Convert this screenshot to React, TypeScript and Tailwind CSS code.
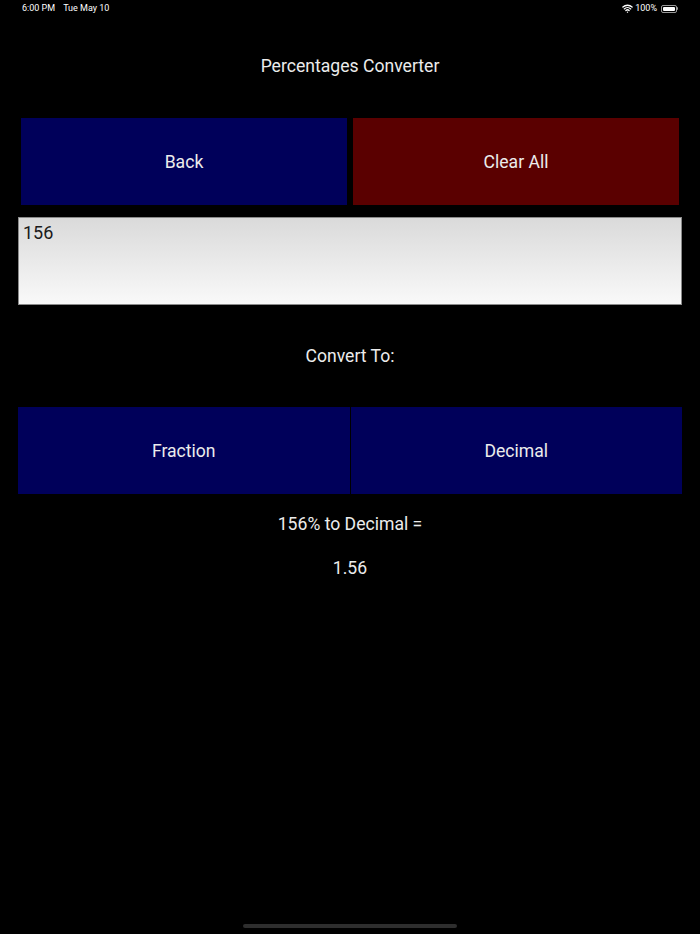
import { Wifi } from "lucide-react";

export default function App() {
  const roboto = { fontFamily: "Roboto, 'Liberation Sans', sans-serif" };

  return (
    <div
      className="relative min-h-[934px] w-full bg-black text-[#ececec] flex flex-col"
      style={roboto}
    >
      {/* status bar */}
      <div className="h-[17px] flex items-center justify-between px-[22px] text-[9px] text-white">
        <div className="flex gap-[8px]">
          <span>6:00 PM</span>
          <span>Tue May 10</span>
        </div>
        <div className="flex items-center gap-[2px]">
          <Wifi className="w-[11px] h-[11px]" strokeWidth={3} />
          <span>100%</span>
          <div className="ml-[2px] flex items-center">
            <div className="w-[16px] h-[8px] rounded-[2px] border border-white/60 p-[1px]">
              <div className="w-full h-full bg-white rounded-[1px]" />
            </div>
            <div className="w-[1px] h-[3px] bg-white/60 rounded-r" />
          </div>
        </div>
      </div>

      <h1 className="mt-[39px] text-center text-[17.6px] leading-[20px]">
        Percentages Converter
      </h1>

      <div className="mt-[42px] px-[21px] flex gap-[6px]">
        <button className="flex-1 h-[87px] pt-[2px] bg-[#00005a] text-[17.6px]">Back</button>
        <button className="flex-1 h-[87px] pt-[2px] bg-[#5a0000] text-[17.6px]">Clear All</button>
      </div>

      <div className="mt-[12px] mx-[18px] h-[88px] border border-[#8a8a8a] bg-gradient-to-b from-[#dadada] to-[#f9f9f9] px-[4px] pt-[3px] text-[18px] leading-[24px] text-[#1a1a1a]">
        156
      </div>

      <p className="mt-[41px] text-center text-[17.6px] leading-[20px]">Convert To:</p>

      <div className="mt-[41px] mx-[18px] flex gap-px">
        <button className="flex-1 h-[87px] pt-[2px] bg-[#00005a] text-[17.6px]">Fraction</button>
        <button className="flex-1 h-[87px] pt-[2px] bg-[#00005a] text-[17.6px]">Decimal</button>
      </div>

      <p className="mt-[20px] text-center text-[17.6px] leading-[20px]">156% to Decimal =</p>
      <p className="mt-[24px] text-center text-[17.6px] leading-[20px]">1.56</p>

      <div className="absolute bottom-[6px] left-1/2 -translate-x-1/2 w-[214px] h-[4px] rounded-full bg-[#2e2e2e]" />
    </div>
  );
}
